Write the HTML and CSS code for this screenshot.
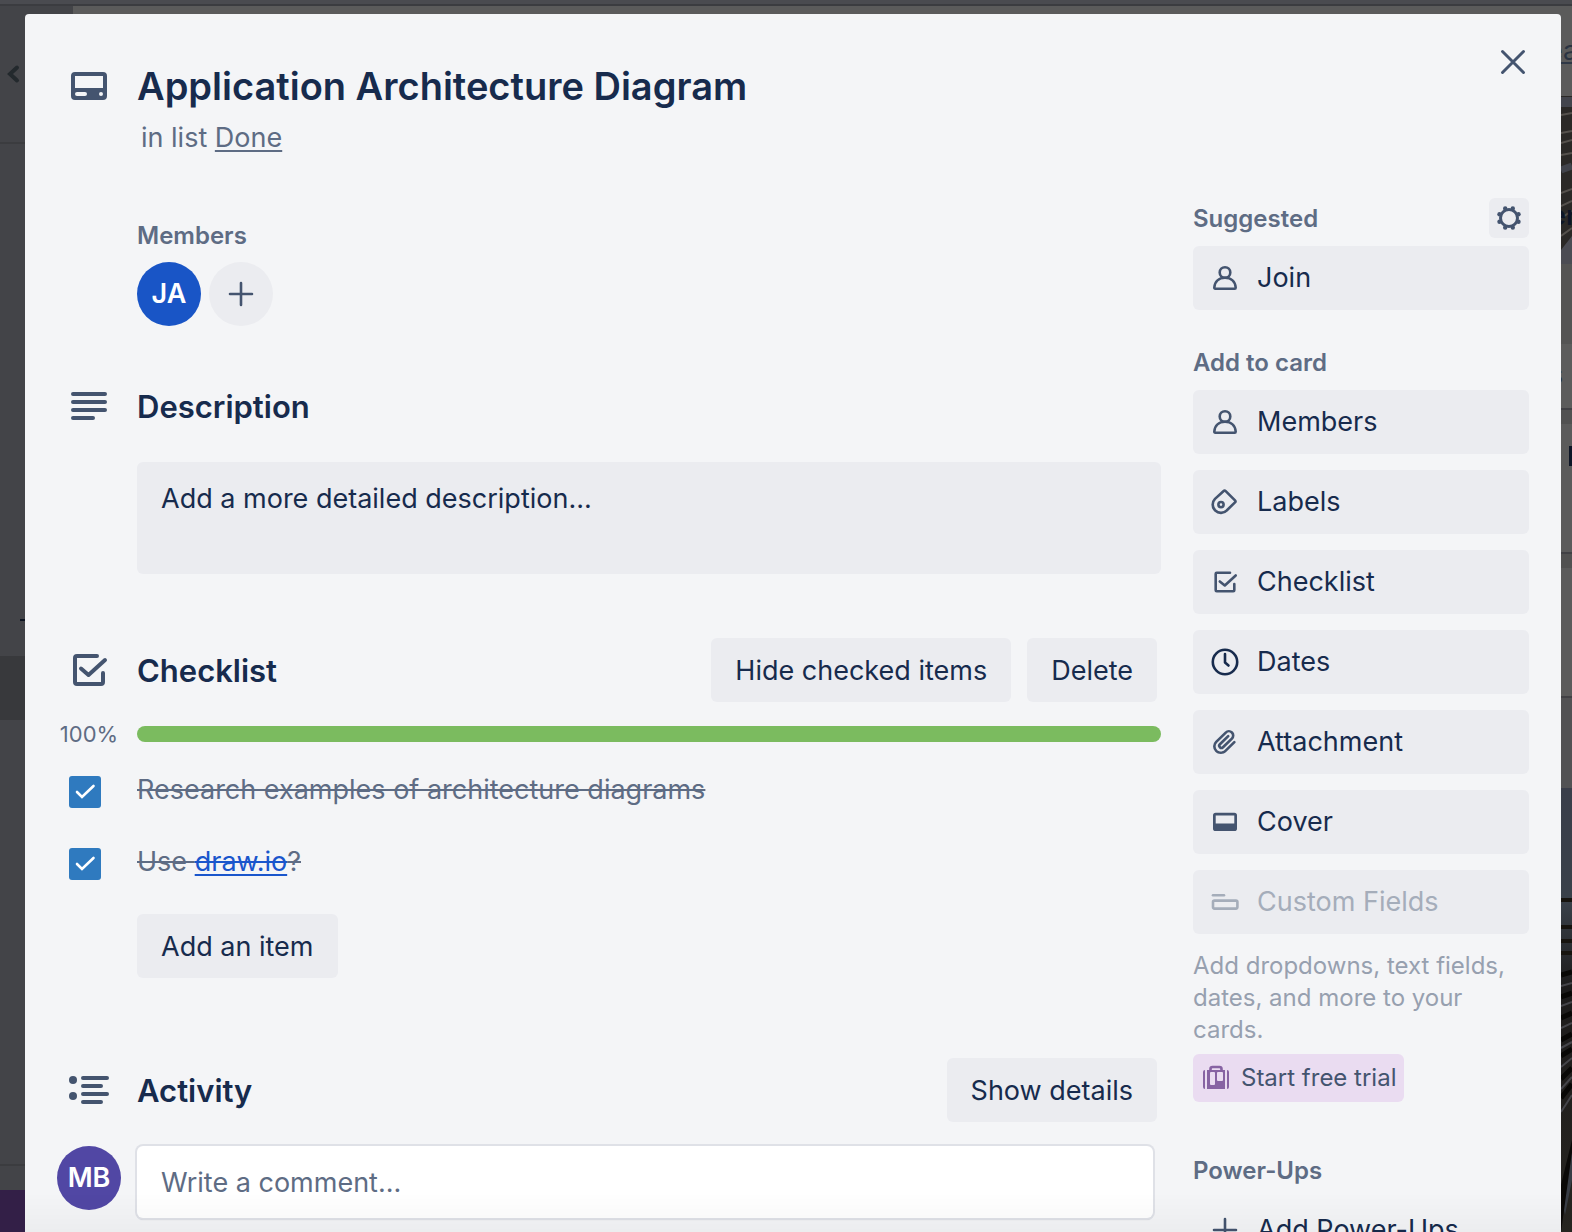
FILE: index.html
```html
<!DOCTYPE html>
<html lang="en">
<head>
<meta charset="utf-8">
<title>Application Architecture Diagram</title>
<link rel="stylesheet" href="styles.css">
</head>
<body>
<div class="board" aria-hidden="true">
  <div class="board-nav"></div>
  <svg class="board-left" width="73" height="1226" viewBox="0 6 73 1226">
    <rect y="6" width="73" height="1226" fill="#434448"/>
    <path d="M17 67.500L10 74l7 6.500" fill="none" stroke="#23292d" stroke-width="4" stroke-linecap="round"/>
    <path d="M0 143h73M0 1165h73" stroke="#3b3c3f" stroke-width="2"/>
    <path d="M20 620h20" stroke="#0b1320" stroke-width="2"/>
    <rect y="656" width="73" height="64" fill="#38393c"/>
    <rect y="1190" width="73" height="42" fill="#331f47"/>
  </svg>
  <svg class="board-right" width="11" height="1226" viewBox="0 6 11 1226">
    <defs>
      <linearGradient id="photo" x1="0" y1="0" x2="0" y2="1">
        <stop offset="0" stop-color="#3a3e4a"/>
        <stop offset=".25" stop-color="#3a414a"/>
        <stop offset=".45" stop-color="#1d1c1c"/>
        <stop offset=".7" stop-color="#22201e"/>
        <stop offset="1" stop-color="#262520"/>
      </linearGradient>
    </defs>
    <rect y="6" width="11" height="90" fill="#5b5b5b"/>
    <text x="-14" y="60" class="board-text">ea</text>
    <path d="M0 63h11" stroke="#2f3847" stroke-width="2"/>
    <rect y="96" width="11" height="168" fill="#2b2927"/>
    <rect y="97" width="11" height="10" fill="#43454d"/>
    <path d="M0 115l11-2M0 133l11-2M0 143l11-3M0 155l11-2M0 193l11-4M0 206l11-5M0 218l11-7M0 236l11-8" stroke="#55514d" stroke-width="2"/>
    <path d="M0 170l11-4" stroke="#41434b" stroke-width="7"/>
    <path d="M0 264V250L11 236v28z" fill="#4b4c54"/>
    <text x="-11" y="225" class="board-text board-strong">er</text>
    <rect y="264" width="11" height="80" fill="#545454"/>
    <rect y="344" width="11" height="64" fill="#5c5c5c"/>
    <text x="-12" y="384" class="board-text">s</text>
    <path d="M0 409h11M0 553h11M0 697h11" stroke="#414145" stroke-width="2"/>
    <rect y="410" width="11" height="14" fill="#515151"/>
    <rect y="424" width="11" height="128" fill="#5b5b5b"/>
    <rect x="8" y="446" width="3" height="20" fill="#0d1526"/>
    <rect y="554" width="11" height="14" fill="#515151"/>
    <rect y="568" width="11" height="128" fill="#5b5b5b"/>
    <rect y="698" width="11" height="90" fill="#525254"/>
    <rect y="788" width="11" height="444" fill="url(#photo)"/>
    <path d="M0 900h11M0 927h11M0 941h11M0 953h11" stroke="#17140f" stroke-width="4"/>
    <path d="M0 975l11-3M0 997l11-4M0 1018l11-5M0 1040l11-6M0 1056l11-7M0 1079l11-11M0 1098l11-14" stroke="#090806" stroke-width="5"/>
    <path d="M0 986l11-3M0 1006l11-4M0 1028l11-5M0 1048l11-6M0 1067l11-9M0 1089l11-12M0 1112l11-17" stroke="#45454a" stroke-width="2"/>
    <path d="M1 1200L11 1150v30L4 1215z" fill="#383d45"/>
    <path d="M0 1232V1185l11-45v12z" fill="#0a0907"/>
  </svg>
</div>

<main class="dialog" role="dialog" aria-labelledby="card-title">
  <header class="dialog-header">
    <div class="card-heading gutter-row">
      <svg class="section-icon" viewBox="0 0 40 40"><path fill-rule="evenodd" d="M6 6h28a4 4 0 0 1 4 4v20a4 4 0 0 1-4 4H6a4 4 0 0 1-4-4V10a4 4 0 0 1 4-4zm0 4v12h28V10zm2 16a2 2 0 0 0 0 4h8a2 2 0 0 0 0-4zm24 0a2 2 0 1 0 0 4 2 2 0 0 0 0-4z"/></svg>
      <h1 class="card-title" id="card-title">Application Architecture Diagram</h1>
      <p class="card-list">in list <a href="#">Done</a></p>
    </div>
    <button class="close-button" type="button" aria-label="Close"><svg class="icon" viewBox="0 0 32 32"><path class="line line-bold" d="M5.500 5.500l21 21M26.500 5.500l-21 21"/></svg></button>
  </header>

  <div class="dialog-body">
    <div class="card-main">
      <section class="members">
        <h2 class="label">Members</h2>
        <div class="member-list">
          <button class="avatar avatar-ja" type="button">JA</button>
          <button class="avatar avatar-add" type="button" aria-label="Add member"><svg class="icon" viewBox="0 0 32 32"><path class="line" d="M16 5v22M5 16h22"/></svg></button>
        </div>
      </section>

      <section class="description">
        <div class="gutter-row">
          <svg class="section-icon" viewBox="0 0 40 40"><path class="thick" d="M4 8h32M4 16h32M4 24h32M4 32h20"/></svg>
          <h2 class="section-title"><label for="description">Description</label></h2>
        </div>
        <textarea class="description-box" id="description" placeholder="Add a more detailed description..."></textarea>
      </section>

      <section class="checklist">
        <div class="gutter-row">
          <svg class="section-icon" viewBox="0 0 40 40"><path class="thick" d="M28 6H8Q6 6 6 8v24q0 2 2 2h24q2 0 2-2v-9M12 18.500l7.500 6.500L36 10"/></svg>
          <div class="section-bar">
            <h2 class="section-title">Checklist</h2>
            <button class="button" type="button">Hide checked items</button>
            <button class="button" type="button">Delete</button>
          </div>
        </div>
        <div class="gutter-row progress-row">
          <span class="percent">100%</span>
          <div class="progress"><div class="progress-fill" style="width:100%"></div></div>
        </div>
        <ul class="items">
          <li class="gutter-row item">
            <span class="tick"><input type="checkbox" id="item-1" checked><svg viewBox="0 0 32 32"><path d="M8 16l5 5L24.500 10"/></svg></span>
            <label class="item-text" for="item-1">Research examples of architecture diagrams</label>
          </li>
          <li class="gutter-row item">
            <span class="tick"><input type="checkbox" id="item-2" checked><svg viewBox="0 0 32 32"><path d="M8 16l5 5L24.500 10"/></svg></span>
            <label class="item-text" for="item-2">Use <a href="#">draw.io</a>?</label>
          </li>
        </ul>
        <button class="button add-item" type="button">Add an item</button>
      </section>

      <section class="activity">
        <div class="gutter-row">
          <svg class="section-icon" viewBox="0 0 40 40"><circle cx="4" cy="10" r="4"/><circle cx="4" cy="26" r="4"/><path class="thick" d="M14 8h24M14 16h18M14 24h24M14 32h18"/></svg>
          <div class="section-bar">
            <h2 class="section-title">Activity</h2>
            <button class="button" type="button">Show details</button>
          </div>
        </div>
        <div class="gutter-row comment-row">
          <span class="avatar avatar-mb">MB</span>
          <input class="comment" type="text" aria-label="Comment" placeholder="Write a comment...">
        </div>
      </section>
    </div>

    <aside class="card-side">
      <section class="side-group">
        <div class="side-head">
          <h2 class="label">Suggested</h2>
          <button class="gear" type="button" aria-label="Suggestion settings"><svg class="icon" viewBox="0 0 32 32"><circle class="ring" cx="16" cy="16" r="8.500"/><circle cx="19.800" cy="6.500" r="2.200"/><circle cx="12.200" cy="6.500" r="2.200"/><circle cx="19.800" cy="25.500" r="2.200"/><circle cx="12.200" cy="25.500" r="2.200"/><circle cx="25.500" cy="12.200" r="2.200"/><circle cx="25.500" cy="19.800" r="2.200"/><circle cx="6.500" cy="12.200" r="2.200"/><circle cx="6.500" cy="19.800" r="2.200"/></svg></button>
        </div>
        <button class="side-button" type="button"><svg class="icon" viewBox="0 0 32 32"><circle class="line" cx="16" cy="10.500" r="5.300"/><path class="line" d="M6.300 26.700Q5.300 26.700 5.300 25.500C5.800 19.500 9.800 15.800 16 15.800s10.200 3.700 10.700 9.700q0 1.200-1 1.200z"/></svg>Join</button>
      </section>

      <section class="side-group">
        <div class="side-head"><h2 class="label">Add to card</h2></div>
        <button class="side-button" type="button"><svg class="icon" viewBox="0 0 32 32"><circle class="line" cx="16" cy="10.500" r="5.300"/><path class="line" d="M6.300 26.700Q5.300 26.700 5.300 25.500C5.800 19.500 9.800 15.800 16 15.800s10.200 3.700 10.700 9.700q0 1.200-1 1.200z"/></svg>Members</button>
        <button class="side-button" type="button"><svg class="icon" viewBox="0 0 32 32"><path class="line" d="M14.400 5.200q1.200-1.100 2.300 0l9.300 9.200q1 1 0 2l-8.100 7.900A8.200 8.200 0 0 1 6 12.900z"/><circle class="line" cx="12" cy="18.600" r="2.600"/></svg>Labels</button>
        <button class="side-button" type="button"><svg class="icon" viewBox="0 0 32 32"><path class="line" d="M21 6.700H7.700q-1 0-1 1v16.600q0 1 1 1h16.600q1 0 1-1V18M10.800 15.500l5 4L26.700 9.500"/></svg>Checklist</button>
        <button class="side-button" type="button"><svg class="icon icon-dark" viewBox="0 0 32 32"><circle class="line" cx="16" cy="16" r="12.200"/><path class="line" d="M16 8v8.500l3.500 3"/></svg>Dates</button>
        <button class="side-button" type="button"><svg class="icon" viewBox="0 0 24 24"><path d="M11.643 17.965c-1.530 1.495-4.016 1.496-5.542.004a3.773 3.773 0 0 1 .002-5.412l7.147-6.985a2.316 2.316 0 0 1 3.240-.003c.893.873.895 2.282.004 3.153l-6.703 6.550a.653.653 0 0 1-.914-.008.620.620 0 0 1 0-.902l6.229-6.087a.941.941 0 0 0 0-1.353.995.995 0 0 0-1.384 0l-6.230 6.087a2.502 2.502 0 0 0 0 3.607 2.643 2.643 0 0 0 3.683.009l6.703-6.550a4.074 4.074 0 0 0-.003-5.859 4.306 4.306 0 0 0-6.002.003l-7.148 6.985a5.655 5.655 0 0 0-.001 8.118c2.290 2.237 6.015 2.238 8.308-.004l6.682-6.530a.941.941 0 0 0 0-1.353.995.995 0 0 0-1.384 0z"/></svg>Attachment</button>
        <button class="side-button" type="button"><svg class="icon" viewBox="0 0 32 32"><path fill-rule="evenodd" d="M6.700 6.700h18.600A2.700 2.700 0 0 1 28 9.400v13a2.700 2.700 0 0 1-2.700 2.700H6.700A2.700 2.700 0 0 1 4 22.400v-13a2.700 2.700 0 0 1 2.700-2.700zm0 2.700v8h18.600v-8z"/></svg>Cover</button>
        <button class="side-button" type="button" disabled><svg class="icon" viewBox="0 0 32 32"><path class="line" d="M4 9.200h11"/><rect class="line" x="4" y="14.600" width="24.400" height="8" rx="1.500"/></svg>Custom Fields</button>
        <p class="side-note">Add dropdowns, text fields, dates, and more to your cards.</p>
        <button class="trial" type="button"><svg class="icon" viewBox="0 0 32 32"><rect x="6" y="8" width="18" height="19"/><rect class="pane" x="9" y="10" width="5" height="13" rx="1"/><rect class="pane" x="16" y="10" width="6" height="9" rx="1"/><path d="M4 8v19q-2 0-2-2V10q0-2 2-2zM26 8v19q2 0 2-2V10q0-2-2-2z"/><path class="line" d="M9.500 8V7q0-2 2-2h7q2 0 2 2v1"/></svg>Start free trial</button>
      </section>

      <section class="side-group side-powerups">
        <div class="side-head"><h2 class="label">Power-Ups</h2></div>
        <button class="side-button side-button-plain" type="button"><svg class="icon" viewBox="0 0 32 32"><path class="line" d="M16 5v22M5 16h22"/></svg>Add Power-Ups</button>
      </section>
    </aside>
  </div>
</main>
<div class="bottom-fade"></div>
</body>
</html>
```

FILE: styles.css
```css
* {
  box-sizing: border-box;
}

body {
  margin: 0;
  height: 100vh;
  overflow: hidden;
  background: #5b5b5b;
  color: #172b4d;
  font: 400 27px/36px Inter, "Liberation Sans", sans-serif;
}

h1,
h2,
p,
ul {
  margin: 0;
  padding: 0;
}

button,
input,
textarea {
  margin: 0;
  border: 0;
  color: inherit;
  font: inherit;
}

/* Dimmed board behind the dialog */

.board {
  position: absolute;
  inset: 0;
  z-index: -1;
  display: flex;
  flex-wrap: wrap;
  justify-content: space-between;
  align-content: flex-start;
  overflow: hidden;
}

.board-nav {
  width: 100%;
  height: 6px;
  border-bottom: 2px solid #3b3c40;
  background: #4a4b50;
}

.board-text {
  fill: #2a3342;
  font-size: 27px;
}

.board-strong {
  fill: #0d1526;
  font-weight: 600;
}

/* Dialog */

.dialog {
  margin: 14px 11px 0 25px;
  padding: 28px 32px 0;
  border-radius: 4px 4px 0 0;
  background: #f4f5f7;
}

.gutter-row {
  display: grid;
  grid-template-columns: 64px 1fr;
  column-gap: 16px;
  align-items: center;
}

.card-main .gutter-row {
  margin-left: -80px;
}

.dialog-header {
  display: flex;
  justify-content: space-between;
  align-items: flex-start;
  margin-right: -4px;
}

.card-heading {
  padding-top: 20px;
  row-gap: 8px;
}

.card-title {
  font-size: 38px;
  font-weight: 600;
  line-height: 48px;
}

.card-list {
  grid-column: 2;
  padding-left: 4px;
  color: #5e6c84;
  line-height: 40px;
}

.card-list a {
  color: inherit;
  text-decoration-thickness: 2px;
  text-underline-offset: 3px;
}

.close-button {
  display: grid;
  place-items: center;
  width: 40px;
  height: 40px;
  padding: 0;
  background: none;
}

.dialog-body {
  display: grid;
  grid-template-columns: 1fr 336px;
  column-gap: 32px;
  padding: 40px 0 0 80px;
}

/* Icons */

.icon {
  flex: none;
  width: 32px;
  height: 32px;
  fill: #44546f;
  stroke: none;
}

.icon-dark {
  fill: #172b4d;
}

.line {
  fill: none;
  stroke: #44546f;
  stroke-width: 2.6px;
  stroke-linecap: round;
  stroke-linejoin: round;
}

.line-bold {
  stroke-width: 3px;
}

.icon-dark .line {
  stroke: #172b4d;
}

.ring {
  fill: none;
  stroke: #44546f;
  stroke-width: 3px;
}

.section-icon {
  justify-self: center;
  width: 40px;
  height: 40px;
  fill: #44546f;
}

.thick {
  fill: none;
  stroke: #44546f;
  stroke-width: 4px;
  stroke-linecap: round;
  stroke-linejoin: round;
}

/* Shared pieces */

.label {
  padding-top: 2px;
  color: #5e6c84;
  font-size: 24px;
  font-weight: 600;
  line-height: 32px;
}

.section-title {
  padding-top: 2px;
  font-size: 31px;
  font-weight: 600;
  line-height: 38px;
}

.section-bar {
  display: flex;
  align-items: center;
  gap: 16px;
  padding-right: 4px;
}

.section-bar .section-title {
  flex: 1;
}

.button {
  height: 64px;
  padding: 2px 24px 0;
  border-radius: 6px;
  background: #ebecf0;
}

.avatar {
  display: grid;
  place-items: center;
  width: 64px;
  height: 64px;
  padding: 0;
  border-radius: 50%;
  color: #fff;
  font-weight: 600;
}

.avatar-ja {
  background: #1955c6;
}

.avatar-add {
  background: #ebecf0;
}

.avatar-mb {
  background: #5147a4;
}

/* Main column */

.members {
  padding-top: 20px;
}

.member-list {
  display: flex;
  gap: 8px;
  margin-top: 10px;
}

.description {
  margin-top: 60px;
}

.description-box {
  display: block;
  width: 100%;
  height: 112px;
  margin-top: 36px;
  padding: 19px 24px;
  border-radius: 6px;
  background: #ebecf0;
  resize: none;
}

.description-box::placeholder {
  color: #172b4d;
}

.checklist {
  margin-top: 64px;
}

.progress-row {
  margin-top: 16px;
}

.percent {
  color: #5e6c84;
  font-size: 22px;
  line-height: 32px;
  text-align: center;
}

.progress {
  height: 16px;
  border-radius: 8px;
  background: #dfe1e6;
  overflow: hidden;
}

.progress-fill {
  height: 100%;
  background: #7bbb5f;
}

.items {
  display: grid;
  gap: 36px;
  margin-top: 22px;
  list-style: none;
}

.tick {
  display: grid;
  width: 32px;
  height: 32px;
  margin-left: 12px;
}

.item {
  align-items: end;
}

.tick > * {
  grid-area: 1 / 1;
  width: 32px;
  height: 32px;
}

.tick input {
  border-radius: 3px;
  background: #2f7abf;
  appearance: none;
}

.tick svg {
  fill: none;
  stroke: #fff;
  stroke-width: 2.6px;
  stroke-linecap: round;
  pointer-events: none;
}

.item-text {
  color: #5e6c84;
  text-decoration: line-through 2px;
}

.item-text a {
  color: #1a56cc;
  text-decoration: underline line-through 2px;
  text-underline-offset: 3px;
}

.add-item {
  margin-top: 34px;
}

.activity {
  margin-top: 80px;
}

.comment-row {
  align-items: start;
  margin-top: 24px;
  padding-right: 8px;
}

.comment {
  width: 100%;
  height: 72px;
  padding: 0 24px;
  border-radius: 6px;
  background: #fff;
  box-shadow: 0 0 0 2px #dfe1e7, 0 2px 1px #c8cbd6;
}

.comment::placeholder {
  color: #5e6c84;
}

/* Side column */

.side-group + .side-group {
  margin-top: 32px;
}

.side-head {
  display: flex;
  justify-content: space-between;
  align-items: center;
  height: 40px;
  margin-bottom: 8px;
}

.gear {
  display: grid;
  place-items: center;
  width: 40px;
  height: 40px;
  padding: 0;
  border-radius: 6px;
  background: #ebecf0;
}

.side-button {
  display: flex;
  align-items: center;
  gap: 16px;
  width: 100%;
  height: 64px;
  padding: 0 16px;
  border-radius: 6px;
  background: #ebecf0;
}

.side-button + .side-button {
  margin-top: 16px;
}

.side-button:disabled {
  color: #a5adba;
}

.side-button:disabled .line {
  stroke: #a5adba;
}

.side-button-plain {
  background: none;
}

.side-note {
  margin-top: 16px;
  color: #97a0af;
  font-size: 24px;
  line-height: 32px;
}

.trial {
  display: flex;
  align-items: center;
  gap: 8px;
  height: 48px;
  margin-top: 8px;
  padding: 0 8px;
  border-radius: 6px;
  background: #eadcf1;
  color: #44546f;
  font-size: 24px;
}

.trial .icon {
  fill: #8763a3;
}

.trial .pane {
  fill: #eadcf1;
}

.trial .line {
  stroke: #8763a3;
}

.side-group + .side-powerups {
  margin-top: 48px;
}

.bottom-fade {
  position: fixed;
  right: 11px;
  bottom: 0;
  left: 25px;
  height: 40px;
  background: linear-gradient(transparent, rgba(0, 0, 0, .03));
  pointer-events: none;
}
```
